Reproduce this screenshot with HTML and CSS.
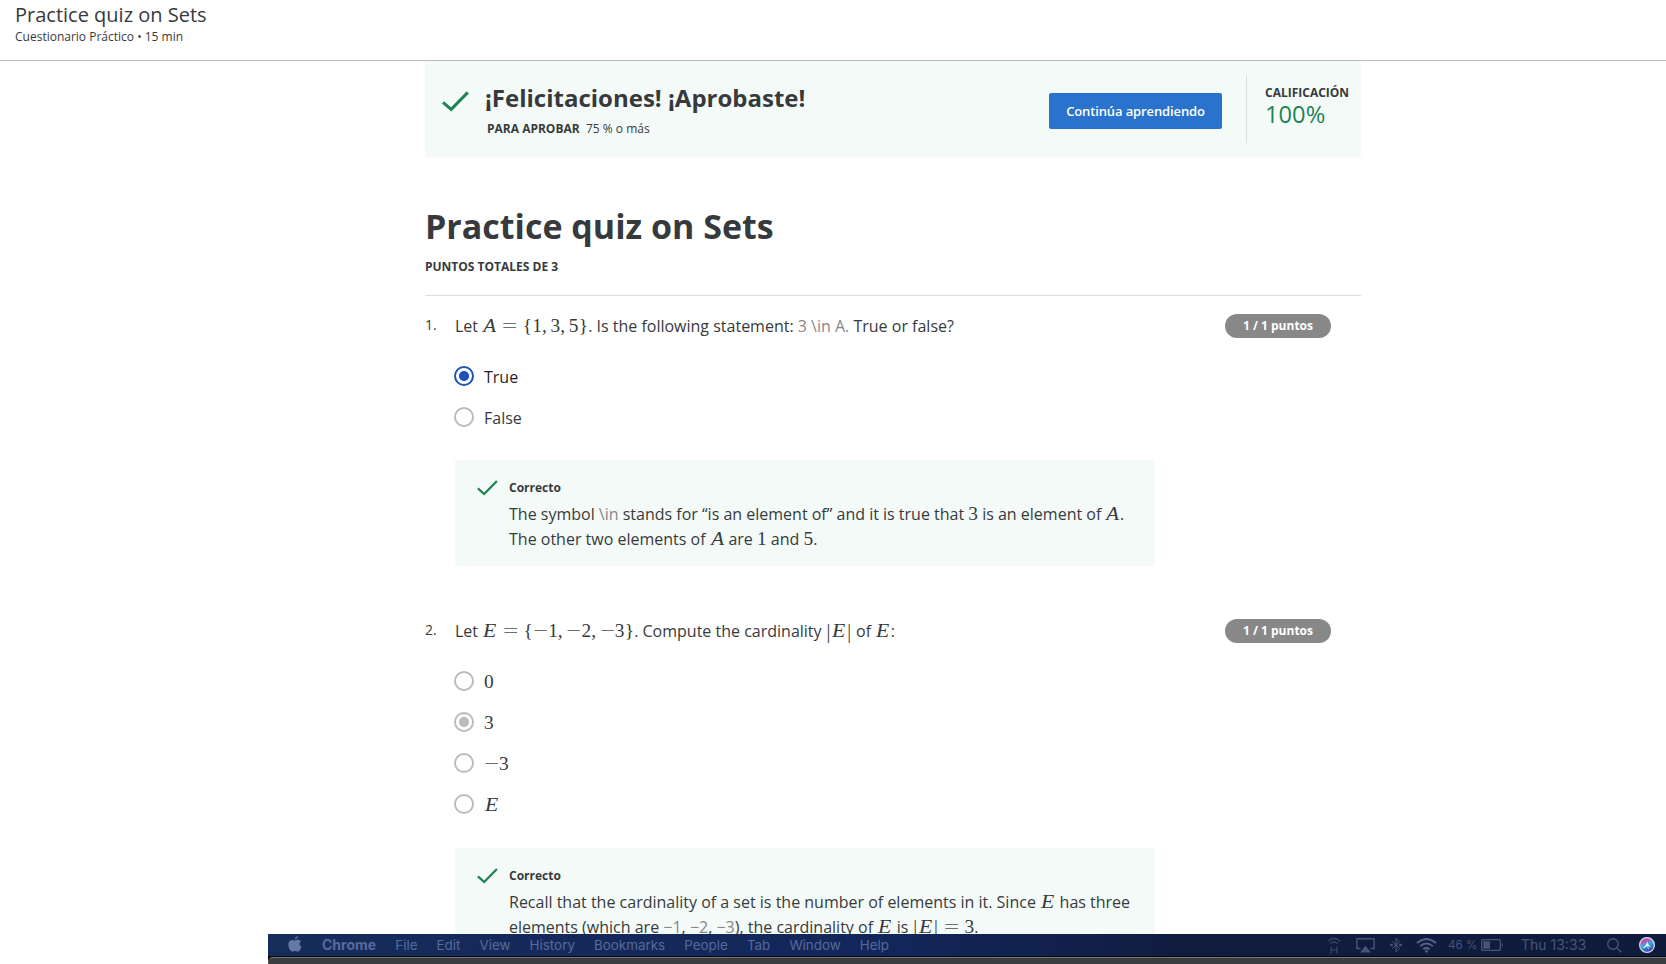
FILE: index.html
```html
<!DOCTYPE html>
<html lang="es">
<head>
<meta charset="utf-8">
<title>Practice quiz on Sets</title>
<link rel="stylesheet" href="styles.css">
</head>
<body>
<header class="topbar">
  <div class="topbar-title">Practice quiz on Sets</div>
  <div class="topbar-meta">Cuestionario Práctico • 15 min</div>
</header>
<main class="page">
  <section class="banner">
    <svg class="banner-check" viewBox="0 0 27 21"><path d="M1 11.3 L9.2 18.4 L25.8 1.4"/></svg>
    <div class="banner-text">
      <h2>¡Felicitaciones! ¡Aprobaste!</h2>
      <p><b>PARA APROBAR</b><span class="pass">75 % o más</span></p>
    </div>
    <button class="next">Continúa aprendiendo</button>
    <div class="grade"><b>CALIFICACIÓN</b><span class="score">100%</span></div>
  </section>
  <h1>Practice quiz on Sets</h1>
  <div class="total">PUNTOS TOTALES DE 3</div>

  <section class="question">
    <div class="num">1.</div>
    <div class="body">
      <div class="prompt">Let <span class="m"><i class="a">A</i><span class="rel">=</span><span class="br">{</span>1<span class="c">,</span>3<span class="c">,</span>5<span class="br">}</span></span>. Is the following statement: <span class="dim">3 \in A.</span> True or false?</div>
      <div class="option on"><span class="radio blue"></span><span>True</span></div>
      <div class="option"><span class="radio"></span><span>False</span></div>
      <div class="feedback">
        <svg class="check" viewBox="0 0 21 16"><path d="M.9 8.4 L7.2 14 L19.9 1"/></svg>
        <div><h3>Correcto</h3>
        <p>The symbol <span class="dim">\in</span> stands for “is an element of” and it is true that <span class="m">3</span> is an element of <span class="m"><i class="a">A</i></span>.<br>The other two elements of <span class="m"><i class="a">A</i></span> are <span class="m">1</span> and <span class="m">5</span>.</p></div>
      </div>
    </div>
    <div class="points">1 / 1 puntos</div>
  </section>

  <section class="question second">
    <div class="num">2.</div>
    <div class="body">
      <div class="prompt">Let <span class="m"><i class="e">E</i><span class="rel">=</span><span class="br">{</span><span class="neg">−</span>1<span class="c">,</span><span class="neg">−</span>2<span class="c">,</span><span class="neg">−</span>3<span class="br">}</span></span>. Compute the cardinality <span class="m"><span class="bar">|</span><i class="e">E</i><span class="bar">|</span></span> of <span class="m"><i class="e">E</i></span>:</div>
      <div class="option"><span class="radio"></span><span class="m">0</span></div>
      <div class="option"><span class="radio gray"></span><span class="m">3</span></div>
      <div class="option"><span class="radio"></span><span class="m"><span class="neg">−</span>3</span></div>
      <div class="option"><span class="radio"></span><span class="m"><i class="e">E</i></span></div>
      <div class="feedback">
        <svg class="check" viewBox="0 0 21 16"><path d="M.9 8.4 L7.2 14 L19.9 1"/></svg>
        <div><h3>Correcto</h3>
        <p>Recall that the cardinality of a set is the number of elements in it. Since <span class="m"><i class="e">E</i></span> has three<br>elements (which are <span class="dim">−1</span>, <span class="dim">−2</span>, <span class="dim">−3</span>), the cardinality of <span class="m"><i class="e">E</i></span> is <span class="m"><span class="bar">|</span><i class="e">E</i><span class="bar">|</span><span class="rel">=</span>3</span>.</p></div>
      </div>
    </div>
    <div class="points">1 / 1 puntos</div>
  </section>
</main>

<footer class="desktop">
  <div class="menubar">
    <svg class="apple" viewBox="0 0 14 16"><path d="M9.9 0C10 1.7 8.500 3.500 6.900 3.400 6.700 1.800 8.300.200 9.900 0ZM13 5.400C11 6.600 11.200 9.700 13.500 10.700 12.800 12.900 11.400 15.600 9.900 15.600 8.800 15.600 8.500 14.900 7.200 14.900 5.900 14.900 5.500 15.600 4.500 15.600 2.700 15.600.400 12 .400 8.700.400 3.900 4.600 3.100 7 4.600 9.400 3.200 11.900 3.800 13 5.400Z"/></svg>
    <nav class="menus"><b>Chrome</b><span>File</span><span>Edit</span><span>View</span><span>History</span><span>Bookmarks</span><span>People</span><span>Tab</span><span>Window</span><span>Help</span></nav>
    <div class="status">
      <svg class="hotspot" width="14" height="17" viewBox="0 0 14 17"><path d="M.7 4.300Q7-1.600 13.300 4.300M3.200 6.700Q7 3.200 10.800 6.700M4.200 9.500V16.500M9.800 9.500V16.500M4.200 13H9.800"/></svg>
      <svg class="airplay" width="19" height="15" viewBox="0 0 19 15"><path d="M4.500 10.500H.8V.8H18.200V10.500H14.500"/><path class="solid" d="M9.500 7.800 15 14.500H4Z"/></svg>
      <svg class="bluetooth" width="12" height="16" viewBox="0 0 12 16"><path d="M2.500 4.300 9.300 11.300 6 14.800V1.200L9.300 4.700 2.500 11.700"/><path class="dots" d="M.2 8H2.800M4.700 8H7.300M9.200 8H11.800"/></svg>
      <svg class="wifi" width="21" height="15" viewBox="0 0 21 15"><path d="M1 5Q10.500-3 20 5M4.200 8.200Q10.500 2.800 16.800 8.200M7.300 11.200Q10.500 8.500 13.700 11.200"/><circle class="solid" cx="10.500" cy="13.200" r="1.600"/></svg>
      <span class="percent">46 %</span>
      <svg class="battery" width="23" height="12" viewBox="0 0 23 12"><rect x=".6" y=".6" width="18.800" height="10.800" rx="1.500"/><path class="solid" d="M2.300 2.300H9V9.700H2.300ZM21 3.800Q22.800 6 21 8.200Z"/></svg>
      <span class="clock">Thu 13:33</span>
      <svg class="search" width="15" height="15" viewBox="0 0 15 15"><circle cx="6" cy="6" r="5.200"/><path d="M9.900 9.900 14.300 14.300"/></svg>
      <svg class="siri" width="16" height="16" viewBox="0 0 16 16">
        <defs><linearGradient id="orb" x1="0" y1="0" x2=".4" y2="1"><stop offset="0" stop-color="#2b5fd0"/><stop offset=".35" stop-color="#c455b8"/><stop offset=".6" stop-color="#2bb5dc"/><stop offset="1" stop-color="#4a34b0"/></linearGradient></defs>
        <circle cx="8" cy="8" r="7.400"/><path d="M3 11.500Q7.500 9 8.300 4.500 9 8.500 13 10.500 9.500 9.800 8.300 8 7 11 3 11.500Z"/><path d="M8 8 9.500 13.500 9.200 8Z"/>
      </svg>
    </div>
  </div>
  <div class="window-edge"></div>
</footer>
</body>
</html>
```
FILE: styles.css
```css
* {
  box-sizing: border-box;
}

body {
  margin: 0;
  height: 964px;
  overflow: hidden;
  font-family: "Open Sans", sans-serif;
  color: #373a3c;
  background: #fff;
}

.topbar {
  height: 61px;
  border-bottom: 1px solid #bbb;
  padding: 2px 15px;
}

.topbar-title {
  font-size: 20px;
  line-height: 26px;
}

.topbar-meta {
  font-size: 12px;
  line-height: 18px;
}

.page {
  width: 936px;
  margin-left: 425px;
}

/* Result banner */
.banner {
  display: flex;
  height: 96px;
  background: #f4faf8;
}

.banner-check {
  width: 27px;
  height: 21px;
  margin: 29.5px 16.5px 0 16.5px;
}

.banner-check path,
.check path {
  fill: none;
  stroke: #1f8354;
  stroke-width: 3;
}

.check path {
  stroke-width: 2.3;
}

h2 {
  margin: 20px 0 0;
  font-size: 24px;
  line-height: 33px;
}

p {
  margin: 0;
}

.banner-text p {
  margin: 6px 0 0 2px;
  font-size: 12px;
  line-height: 18px;
}

.pass {
  margin-left: 6.3px;
}

.next {
  width: 173px;
  height: 36px;
  margin: 32px 24px 0 auto;
  padding: 0;
  border: 0;
  border-radius: 2px;
  background: #2a73cc;
  color: #fff;
  font: 600 13px "Open Sans", sans-serif;
  letter-spacing: -0.12px;
}

.grade {
  width: 115px;
  height: 68px;
  margin-top: 14px;
  padding: 10px 0 0 18px;
  border-left: 1px solid #ddd;
  font-size: 12px;
  line-height: 16px;
}

.score {
  display: block;
  color: #1f8354;
  font-size: 23.7px;
  line-height: 26px;
}

h1 {
  margin: 47px 0 10px;
  font-size: 34px;
  line-height: 44px;
}

.total {
  height: 38px;
  border-bottom: 1px solid #ddd;
  font-size: 12px;
  font-weight: 700;
  line-height: 18px;
}

/* Questions */
.question {
  display: flex;
  align-items: flex-start;
  margin-top: 18px;
}

.second {
  margin-top: 53px;
}

.num {
  width: 30px;
  margin-top: -1.5px;
  font-size: 14px;
  line-height: 24px;
}

.body {
  width: 700px;
  font-size: 16px;
}

.prompt {
  height: 24px;
  margin-bottom: 17.5px;
  line-height: 24px;
  white-space: nowrap;
}

.option {
  display: flex;
  align-items: center;
  gap: 10px;
  height: 41px;
  line-height: 22px;
}

.option > span + span {
  padding-top: 2px;
}

.on {
  color: #1f1f1f;
}

.radio {
  width: 20px;
  height: 20px;
  margin-left: -1px;
  border: 2px solid #bbb;
  border-radius: 50%;
}

.gray {
  background: radial-gradient(circle, #bbb 4.6px, transparent 5.4px);
}

.blue {
  border-color: #1d52bb;
  background: radial-gradient(circle, #1d52bb 4.6px, transparent 5.4px);
}

.feedback {
  display: flex;
  height: 106px;
  margin-top: 22.5px;
  padding: 19px 0 0 21.5px;
  background: #f4faf8;
}

.second .feedback {
  margin-top: 23.5px;
}

.feedback p {
  line-height: 25px;
  white-space: nowrap;
}

.check {
  flex: none;
  width: 21px;
  height: 16px;
  margin: 1px 11.5px 0 0;
}

h3 {
  margin: 0 0 5px;
  font-size: 12px;
  line-height: 18px;
}

.dim {
  color: #888;
}

.points {
  width: 106px;
  height: 24px;
  margin-left: 70px;
  border-radius: 12px;
  background: #888;
  color: #fff;
  font-size: 12px;
  font-weight: 700;
  line-height: 23px;
  text-align: center;
}

/* Inline math */
.m {
  font-family: "Liberation Serif", serif;
  font-size: 19.36px;
  line-height: 1;
}

.m > * {
  display: inline-block;
  line-height: 1;
  text-align: center;
}

.a {
  width: 0.75em;
  transform: translateX(0.5px) scaleX(1.08);
}

.e {
  width: 0.796em;
  transform: scaleX(1.12);
}

.rel {
  width: 0.778em;
  margin: 0 0.278em;
  color: #6c6f70;
  transform: scaleX(1.4);
}

.neg {
  width: 0.778em;
  color: #6c6f70;
  transform: scaleX(1.35);
}

.br {
  width: 0.5em;
}

.bar {
  width: 0.278em;
  transform: scaleY(1.12);
}

.m > .c {
  width: 0.445em;
  text-align: left;
}

/* Menu bar over the page bottom */
.desktop {
  position: fixed;
  left: 268px;
  right: 0;
  bottom: 0;
  height: 30px;
  background: #05080f;
}

.menubar {
  display: flex;
  align-items: center;
  height: 22px;
  padding: 0 11px 0 20px;
  background: linear-gradient(90deg, #162c5a, #13265a 45%, #101d40 65%, #0e1b3b);
  color: #576a9c;
  font: 13.4px/22px Inter, sans-serif;
}

.apple {
  width: 14px;
  height: 16px;
  margin-top: -2px;
  fill: #6577a5;
}

.menus {
  display: flex;
  gap: 19.1px;
  margin-left: 20px;
}

.menus b {
  font-size: 14px;
}

.status {
  display: flex;
  align-items: center;
  margin-left: auto;
  color: #46547c;
}

.status svg {
  fill: none;
  stroke: #46547c;
  stroke-width: 1.4;
}

.status .solid {
  fill: #46547c;
  stroke: none;
}

.status .hotspot {
  stroke: #303d64;
  stroke-width: 1.7;
}

.airplay {
  margin-left: 15px;
}

.bluetooth {
  margin-left: 15px;
}

.status .bluetooth {
  stroke-width: 1;
}

.bluetooth .dots {
  stroke-width: 2.6;
}

.wifi {
  margin-left: 14px;
}

.status .wifi {
  stroke: #53618b;
  stroke-width: 2;
}

.percent {
  width: 30px;
  margin-left: 11px;
  font-size: 11.7px;
  white-space: nowrap;
}

.battery {
  margin-left: 3px;
}

.clock {
  width: 65px;
  margin-left: 17px;
  font-size: 14px;
  white-space: nowrap;
}

.search {
  margin-left: 21px;
}

.siri {
  margin-left: 17px;
}

.status .siri circle {
  fill: url(#orb);
  stroke: #d8d9ea;
  stroke-width: 1.2;
}

.status .siri path {
  fill: #fff;
  stroke: none;
}

.window-edge {
  height: 7px;
  margin-top: 1px;
  border-top: 1px solid #747778;
  border-left: 1px solid #55585a;
  border-top-left-radius: 5px;
  background: #3b3d3f;
}
```
